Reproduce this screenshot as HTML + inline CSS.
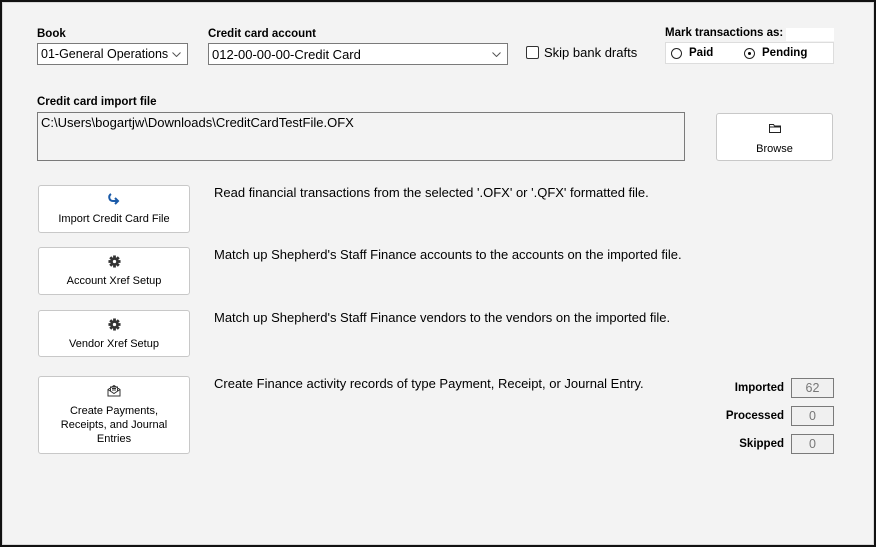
<!DOCTYPE html>
<html><head><style>
*{box-sizing:border-box;margin:0;padding:0}
body{width:876px;height:547px;background:#111;font-family:"Liberation Sans",Arial,sans-serif;position:relative;overflow:hidden;color:#000}
#f{position:absolute;left:2px;top:2px;width:872px;height:543px;background:#f3f3f3;border:1px solid #d8d8d8}
.a{position:absolute}
.lb{font-size:11.5px;font-weight:bold}
.sel{background:#fff;border:1px solid #7a7a7a;height:22px;font-size:13px;padding:3px 3px;white-space:nowrap}
.sel svg{position:absolute;right:6px;top:8px}
.btn{background:#fff;border:1px solid #c8c8c8;border-radius:3px;font-size:11px;text-align:center}
.d{font-size:13px}
.rad{display:inline-block;width:11px;height:11px;border:1px solid #222;border-radius:50%;position:absolute}
.num{border:1px solid #7a7a7a;background:#f0f0f0;width:43px;height:20px;font-size:12.5px;color:#777;text-align:center;line-height:18px}
.nl{font-size:11.5px;font-weight:bold;text-align:right;width:80px}
</style></head><body><div id="f"></div>
<div class="a lb" style="left:37px;top:28px">Book</div>
<div class="a sel" style="left:37px;top:43px;width:151px;font-size:12.5px">01-General Operations<svg width="9" height="5" viewBox="0 0 9 5"><path d="M0.5 0.5l4 4 4-4" fill="none" stroke="#555"/></svg></div>
<div class="a lb" style="left:208px;top:28px">Credit card account</div>
<div class="a sel" style="left:208px;top:43px;width:300px">012-00-00-00-Credit Card<svg width="9" height="5" viewBox="0 0 9 5"><path d="M0.5 0.5l4 4 4-4" fill="none" stroke="#555"/></svg></div>
<div class="a" style="left:526px;top:46px;width:13px;height:13px;border:1px solid #333;border-radius:2px;background:#fff"></div>
<div class="a d" style="left:544px;top:45px">Skip bank drafts</div>
<div class="a" style="left:786px;top:28px;width:48px;height:13px;background:#fff"></div>
<div class="a lb" style="left:665px;top:27px">Mark transactions as:</div>
<div class="a" style="left:665px;top:42px;width:169px;height:22px;background:#fff;border:1px solid #ddd"></div>
<span class="rad" style="left:671px;top:48px"></span>
<div class="a lb" style="left:689px;top:47px">Paid</div>
<span class="rad" style="left:744px;top:48px"><span style="position:absolute;left:3px;top:3px;width:3px;height:3px;background:#000;border-radius:50%"></span></span>
<div class="a lb" style="left:762px;top:47px">Pending</div>
<div class="a lb" style="left:37px;top:96px">Credit card import file</div>
<div class="a" style="left:37px;top:112px;width:648px;height:49px;border:1px solid #7a7a7a;font-size:13px;padding:2px 3px">C:\Users\bogartjw\Downloads\CreditCardTestFile.OFX</div>
<div class="a btn" style="left:716px;top:113px;width:117px;height:48px;padding-top:8px">
<svg width="14" height="12" viewBox="0 0 14 12"><path d="M1.5 2.5h4l1 1.5h6v6.5h-11z M1.5 5h11" fill="none" stroke="#222"/></svg><div style="margin-top:6px">Browse</div></div>
<div class="a btn" style="left:38px;top:185px;width:152px;height:48px;padding-top:6px">
<svg width="14" height="14" viewBox="0 0 14 14"><path d="M4 2C1 4 2 9 6 9h5M8 6l3 3-3 3" fill="none" stroke="#1a5aa8" stroke-width="2"/></svg><div style="margin-top:4px">Import Credit Card File</div></div>
<div class="a btn" style="left:38px;top:247px;width:152px;height:48px;padding-top:7px">
<svg width="13" height="13" viewBox="0 0 14 14"><g fill="#333"><circle cx="7" cy="7" r="4.5"/><rect x="5.5" y="0.5" width="3" height="13"/><rect x="0.5" y="5.5" width="13" height="3"/><rect x="5.5" y="0.5" width="3" height="13" transform="rotate(45 7 7)"/><rect x="5.5" y="0.5" width="3" height="13" transform="rotate(-45 7 7)"/></g><circle cx="7" cy="7" r="1.8" fill="#fff"/></svg><div style="margin-top:4px">Account Xref Setup</div></div>
<div class="a btn" style="left:38px;top:310px;width:152px;height:47px;padding-top:7px">
<svg width="13" height="13" viewBox="0 0 14 14"><g fill="#333"><circle cx="7" cy="7" r="4.5"/><rect x="5.5" y="0.5" width="3" height="13"/><rect x="0.5" y="5.5" width="13" height="3"/><rect x="5.5" y="0.5" width="3" height="13" transform="rotate(45 7 7)"/><rect x="5.5" y="0.5" width="3" height="13" transform="rotate(-45 7 7)"/></g><circle cx="7" cy="7" r="1.8" fill="#fff"/></svg><div style="margin-top:4px">Vendor Xref Setup</div></div>
<div class="a btn" style="left:38px;top:376px;width:152px;height:78px;padding-top:7px;line-height:14px">
<svg width="14" height="13" viewBox="0 0 14 13"><path d="M1 5.5l6-4 6 4v6.5H1z M1 5.5l6 4 6-4 M3.5 7V3h7v4 M5 4.5h4M5 6h4" fill="none" stroke="#333"/></svg><div style="margin-top:3px">Create Payments,<br>Receipts, and Journal<br>Entries</div></div>
<div class="a d" style="left:214px;top:185px">Read financial transactions from the selected '.OFX' or '.QFX' formatted file.</div>
<div class="a d" style="left:214px;top:247px">Match up Shepherd's Staff Finance accounts to the accounts on the imported file.</div>
<div class="a d" style="left:214px;top:310px">Match up Shepherd's Staff Finance vendors to the vendors on the imported file.</div>
<div class="a d" style="left:214px;top:376px">Create Finance activity records of type Payment, Receipt, or Journal Entry.</div>
<div class="a nl" style="left:704px;top:382px">Imported</div>
<div class="a nl" style="left:704px;top:410px">Processed</div>
<div class="a nl" style="left:704px;top:438px">Skipped</div>
<div class="a num" style="left:791px;top:378px">62</div>
<div class="a num" style="left:791px;top:406px">0</div>
<div class="a num" style="left:791px;top:434px">0</div>
</body></html>
